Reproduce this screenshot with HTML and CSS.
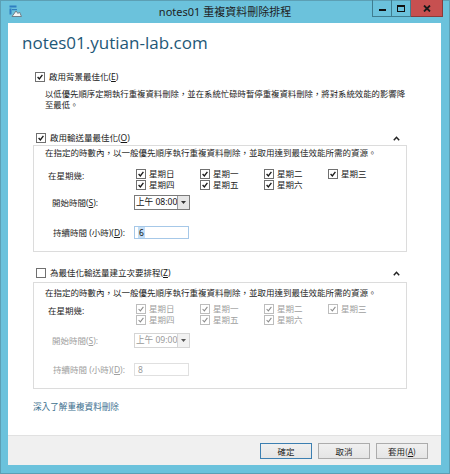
FILE: index.html
```html
<!DOCTYPE html>
<html lang="zh-Hant">
<head>
<meta charset="utf-8">
<title>notes01 重複資料刪除排程</title>
<link rel="stylesheet" href="styles.css">
</head>
<body>
<div class="window">
  <div class="titlebar">
    <svg class="app-icon" width="13" height="12" viewBox="0 0 13 12">
      <rect x="0.5" y="0.5" width="7" height="2" fill="#2f7fc1"/>
      <rect x="0.5" y="3.5" width="2" height="6" fill="#2f7fc1"/>
      <rect x="3" y="4" width="5" height="1.2" fill="#2f7fc1"/>
      <path d="M3 11.5 L7 6 L9 8.5 L10.5 7 L12.5 11.5 Z" fill="#f4f4f4" stroke="#6d7f8a" stroke-width="1"/>
    </svg>
    <div class="title">notes01 重複資料刪除排程</div>
    <div class="caption-btns">
      <div class="cbtn min"><span class="min-bar"></span></div>
      <div class="cbtn max"><span class="max-box"></span></div>
      <div class="cbtn close">
        <svg width="8" height="7" viewBox="0 0 8 7"><path d="M1 0.5 L7 6.5 M7 0.5 L1 6.5" stroke="#1a1a1a" stroke-width="1.8"/></svg>
      </div>
    </div>
  </div>

  <div class="client">
    <div class="content">
      <h1 class="server">notes01.yutian-lab.com</h1>

      <div class="check-row top-check">
        <span class="cb on"><svg viewBox="0 0 10 10"><path d="M2 5 L4.2 7.4 L8 2.4"/></svg></span>
        <span>啟用背景最佳化(<u>E</u>)</span>
      </div>
      <p class="desc">以低優先順序定期執行重複資料刪除，並在系統忙碌時暫停重複資料刪除，將對系統效能的影響降<br>至最低。</p>

      <section class="group g1">
        <div class="group-head">
          <span class="cb on"><svg viewBox="0 0 10 10"><path d="M2 5 L4.2 7.4 L8 2.4"/></svg></span>
          <span>啟用輸送量最佳化(<u>O</u>)</span>
          <svg class="chev" width="7" height="5" viewBox="0 0 7 5"><path d="M0.8 4.2 L3.5 1.3 L6.2 4.2" fill="none" stroke="#222" stroke-width="1.5"/></svg>
        </div>
        <div class="group-box">
          <p class="gdesc">在指定的時數內，以一般優先順序執行重複資料刪除，並取用達到最佳效能所需的資源。</p>
          <div class="row days-row">
            <span class="flabel l-days">在星期幾:</span>
            <div class="days">
              <span class="day"><span class="cb sm on"><svg viewBox="0 0 10 10"><path d="M2 5 L4.2 7.4 L8 2.4"/></svg></span>星期日</span>
              <span class="day"><span class="cb sm on"><svg viewBox="0 0 10 10"><path d="M2 5 L4.2 7.4 L8 2.4"/></svg></span>星期一</span>
              <span class="day"><span class="cb sm on"><svg viewBox="0 0 10 10"><path d="M2 5 L4.2 7.4 L8 2.4"/></svg></span>星期二</span>
              <span class="day"><span class="cb sm on"><svg viewBox="0 0 10 10"><path d="M2 5 L4.2 7.4 L8 2.4"/></svg></span>星期三</span>
              <span class="day"><span class="cb sm on"><svg viewBox="0 0 10 10"><path d="M2 5 L4.2 7.4 L8 2.4"/></svg></span>星期四</span>
              <span class="day"><span class="cb sm on"><svg viewBox="0 0 10 10"><path d="M2 5 L4.2 7.4 L8 2.4"/></svg></span>星期五</span>
              <span class="day"><span class="cb sm on"><svg viewBox="0 0 10 10"><path d="M2 5 L4.2 7.4 L8 2.4"/></svg></span>星期六</span>
            </div>
          </div>
          <div class="row start-row">
            <span class="flabel l-start">開始時間(<u>S</u>):</span>
            <div class="combo"><span class="combo-text">上午 08:00</span><span class="combo-btn"><svg width="5" height="3" viewBox="0 0 5 3"><path d="M0 0 H5 L2.5 3 Z" fill="#333"/></svg></span></div>
          </div>
          <div class="row dur-row">
            <span class="flabel l-dur">持續時間 (小時)(<u>D</u>):</span>
            <div class="tinput focus"><span class="sel">6</span></div>
          </div>
        </div>
      </section>

      <section class="group g2 disabled">
        <div class="group-head">
          <span class="cb"></span>
          <span>為最佳化輸送量建立次要排程(<u>Z</u>)</span>
          <svg class="chev" width="7" height="5" viewBox="0 0 7 5"><path d="M0.8 4.2 L3.5 1.3 L6.2 4.2" fill="none" stroke="#222" stroke-width="1.5"/></svg>
        </div>
        <div class="group-box">
          <p class="gdesc">在指定的時數內，以一般優先順序執行重複資料刪除，並取用達到最佳效能所需的資源。</p>
          <div class="row days-row">
            <span class="flabel l-days">在星期幾:</span>
            <div class="days">
              <span class="day"><span class="cb sm on"><svg viewBox="0 0 10 10"><path d="M2 5 L4.2 7.4 L8 2.4"/></svg></span>星期日</span>
              <span class="day"><span class="cb sm on"><svg viewBox="0 0 10 10"><path d="M2 5 L4.2 7.4 L8 2.4"/></svg></span>星期一</span>
              <span class="day"><span class="cb sm on"><svg viewBox="0 0 10 10"><path d="M2 5 L4.2 7.4 L8 2.4"/></svg></span>星期二</span>
              <span class="day"><span class="cb sm on"><svg viewBox="0 0 10 10"><path d="M2 5 L4.2 7.4 L8 2.4"/></svg></span>星期三</span>
              <span class="day"><span class="cb sm on"><svg viewBox="0 0 10 10"><path d="M2 5 L4.2 7.4 L8 2.4"/></svg></span>星期四</span>
              <span class="day"><span class="cb sm on"><svg viewBox="0 0 10 10"><path d="M2 5 L4.2 7.4 L8 2.4"/></svg></span>星期五</span>
              <span class="day"><span class="cb sm on"><svg viewBox="0 0 10 10"><path d="M2 5 L4.2 7.4 L8 2.4"/></svg></span>星期六</span>
            </div>
          </div>
          <div class="row start-row">
            <span class="flabel l-start">開始時間(<u>S</u>):</span>
            <div class="combo"><span class="combo-text">上午 09:00</span><span class="combo-btn"><svg width="5" height="3" viewBox="0 0 5 3"><path d="M0 0 H5 L2.5 3 Z" fill="#555"/></svg></span></div>
          </div>
          <div class="row dur-row">
            <span class="flabel l-dur">持續時間 (小時)(<u>D</u>):</span>
            <div class="tinput"><span>8</span></div>
          </div>
        </div>
      </section>

      <a class="learn" href="#">深入了解重複資料刪除</a>
    </div>

    <div class="footer">
      <button class="btn default">確定</button>
      <button class="btn">取消</button>
      <button class="btn">套用(<u>A</u>)</button>
    </div>
  </div>
</div>
</body>
</html>
```

FILE: styles.css
```css
html, body {
  margin: 0;
  padding: 0;
  background: #ffffff;
}

body {
  font-family: "Noto Sans", "Noto Sans CJK TC", sans-serif;
  color: #161616;
}

.window {
  width: 450px;
  height: 474px;
  box-sizing: border-box;
  background: #6bc2dc;
  border: 1px solid #5c9fb4;
  display: flex;
  flex-direction: column;
}

/* ---------- title bar ---------- */
.titlebar {
  height: 22px;
  display: grid;
  grid-template-columns: 1fr auto 1fr;
  align-items: start;
}

.app-icon {
  margin: 4px 0 0 8px;
}

.title {
  font-size: 11px;
  line-height: 22px;
  color: #1e1e1e;
  white-space: nowrap;
}

.caption-btns {
  justify-self: end;
  display: flex;
  margin-right: 6px;
  margin-top: -1px;
}

.cbtn {
  height: 17px;
  box-sizing: border-box;
  border: 1px solid #3f7d90;
  border-top: none;
  display: flex;
  align-items: center;
  justify-content: center;
}

.cbtn.min { width: 20px; }
.cbtn.max { width: 19px; border-left: none; }
.cbtn.close {
  width: 32px;
  border-left: none;
  background: #c75050;
  border-color: #8a3a3a;
}

.min-bar {
  width: 7px;
  height: 2px;
  margin-top: 4px;
  background: #111;
}

.max-box {
  width: 6px;
  height: 4px;
  border: 1.5px solid #111;
  border-top-width: 2px;
}

/* ---------- client ---------- */
.client {
  margin: 0 8px 0 7px;
  height: 442px;
  background: #ffffff;
  display: flex;
  flex-direction: column;
}

.content {
  flex: 1;
  padding: 0 34px 0 25px;
  display: flex;
  flex-direction: column;
  align-items: stretch;
}

.server {
  margin: 9px 0 0 -11px;
  font-family: "Open Sans", "Noto Sans", sans-serif;
  font-weight: 400;
  font-size: 17px;
  line-height: 22px;
  color: #1e5877;
}

.check-row, .group-head {
  display: flex;
  align-items: center;
  height: 12px;
  font-size: 8.5px;
  line-height: 12px;
  white-space: nowrap;
}

.check-row.top-check {
  margin: 17px 0 0 2px;
}

.desc {
  margin: 5px 0 0 12px;
  font-size: 8.4px;
  line-height: 11px;
  color: #222;
  white-space: nowrap;
}

/* checkbox */
.cb {
  width: 10px;
  height: 10px;
  box-sizing: border-box;
  border: 1px solid #707070;
  background: #fff;
  margin-right: 4px;
  flex: none;
  display: inline-flex;
}

.cb svg {
  width: 8px;
  height: 8px;
}

.cb svg path {
  fill: none;
  stroke: #1a1a1a;
  stroke-width: 1.7;
}

.cb.sm {
  margin-right: 3px;
}

/* ---------- groups ---------- */
.group {
  display: flex;
  flex-direction: column;
}

.g1 { margin-top: 22px; }
.g2 { margin-top: 15px; }

.group-head {
  margin-left: 3px;
}

.chev {
  margin-left: auto;
  margin-right: 7px;
}

.group-box {
  margin-top: 1px;
  border: 1px solid #dcdcdc;
  padding: 1px 0 12px 11px;
}

.g2 .group-box {
  margin-top: 3px;
  padding-top: 4px;
}

.gdesc {
  margin: 0;
  font-size: 8.5px;
  line-height: 12px;
  color: #1e1e1e;
  white-space: nowrap;
}

.row {
  display: flex;
  align-items: flex-start;
  font-size: 8.5px;
}

.flabel {
  width: 89px;
  box-sizing: border-box;
  flex: none;
  white-space: nowrap;
  color: #262626;
}

.l-days { padding-left: 3px; line-height: 15px; }
.l-start { padding-left: 7px; line-height: 15px; }
.l-dur { padding-left: 8px; line-height: 13px; }

.days-row { margin-top: 9px; }
.g2 .days-row { margin-top: 4px; }

.days {
  display: grid;
  grid-template-columns: repeat(4, 64px);
  grid-auto-rows: 11px;
  padding-left: 2px;
}

.day {
  display: flex;
  align-items: center;
  line-height: 11px;
  white-space: nowrap;
  color: #222;
}

.start-row { margin-top: 5px; }
.g2 .start-row { margin-top: 8px; }

.combo {
  width: 56px;
  height: 15px;
  box-sizing: border-box;
  border: 1px solid #7a7a7a;
  display: flex;
  background: #fff;
}

.combo-text {
  flex: 1;
  font-size: 8.6px;
  line-height: 13px;
  padding-left: 1px;
  white-space: nowrap;
  overflow: hidden;
  color: #111;
}

.combo-btn {
  width: 11px;
  flex: none;
  border-left: 1px solid #9a9a9a;
  background: #e6e6e6;
  display: flex;
  align-items: center;
  justify-content: center;
}

.dur-row { margin-top: 16px; }
.g2 .dur-row { margin-top: 15px; }

.tinput {
  width: 55px;
  height: 13px;
  box-sizing: border-box;
  border: 1px solid #c9c9c9;
  font-size: 8.5px;
  line-height: 11px;
  padding-left: 3px;
  color: #111;
  background: #fff;
}

.tinput.focus {
  border-color: #a6c8e8;
}

.sel {
  background: #c4def6;
  padding: 0 1px;
}

/* disabled group */
.disabled .day,
.disabled .l-start,
.disabled .l-dur {
  color: #a0a0a0;
}

.disabled .cb.sm {
  border-color: #bdbdbd;
}

.disabled .cb.sm svg path {
  stroke: #8c8c8c;
  stroke-width: 1.3;
}

.disabled .combo {
  border-color: #d5d5d5;
}

.disabled .combo-text,
.disabled .tinput {
  color: #9a9a9a;
}

.disabled .combo-btn {
  border-left-color: #d5d5d5;
  background: #f2f2f2;
}

.disabled .tinput {
  border-color: #e0e0e0;
}

.learn {
  margin-top: 12px;
  font-size: 8.6px;
  line-height: 12px;
  color: #3d6f8e;
  text-decoration: none;
  align-self: flex-start;
}

/* ---------- footer ---------- */
.footer {
  height: 30px;
  box-sizing: border-box;
  border-top: 1px solid #e1e1e1;
  background: #f0f0f0;
  display: flex;
  justify-content: flex-end;
  align-items: flex-start;
  gap: 6px;
  padding: 7px 13px 0 0;
}

.btn {
  width: 52px;
  height: 16px;
  box-sizing: border-box;
  border: 1px solid #acacac;
  background: linear-gradient(#f0f0f0, #e5e5e5);
  font-family: "Noto Sans CJK TC", "Noto Sans", sans-serif;
  font-size: 8.5px;
  line-height: 12px;
  padding: 0;
  color: #1a1a1a;
}

.btn.default {
  border-color: #3c7fb1;
}
```
